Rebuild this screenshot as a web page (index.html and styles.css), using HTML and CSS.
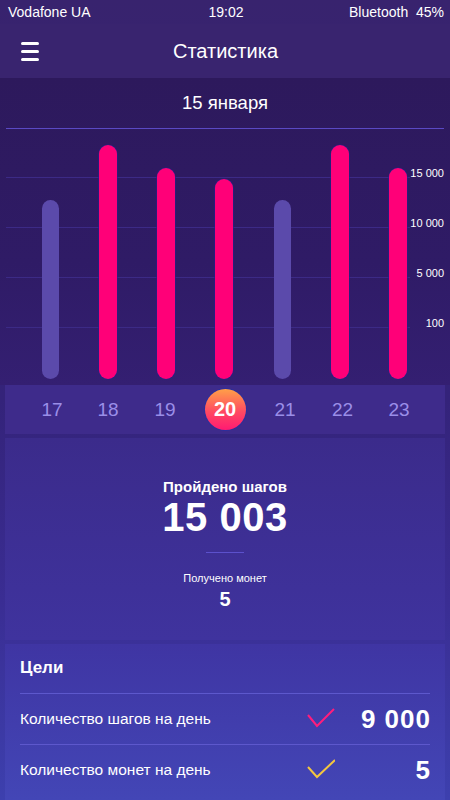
FILE: index.html
```html
<!DOCTYPE html>
<html lang="ru">
<head>
<meta charset="utf-8">
<title>Статистика</title>
<link rel="stylesheet" href="styles.css">
</head>
<body>
<div class="screen">
  <div class="status">
    <span class="carrier">Vodafone UA</span>
    <span class="time">19:02</span>
    <span class="batt">Bluetooth&nbsp;&nbsp;45%</span>
  </div>
  <header class="appbar">
    <div class="menu"><span></span><span></span><span></span></div>
    <h1 class="title">Статистика</h1>
    <div></div>
  </header>
  <section class="chart-panel">
    <div class="date">15 января</div>
    <div class="chart">
      <div class="grid">
        <div class="grow"><div class="gline"></div><div class="glabel">15 000</div></div>
        <div class="grow"><div class="gline"></div><div class="glabel">10 000</div></div>
        <div class="grow"><div class="gline"></div><div class="glabel">5 000</div></div>
        <div class="grow"><div class="gline"></div><div class="glabel">100</div></div>
      </div>
      <div class="bars">
        <div class="bar muted" style="height:179px"></div>
        <div class="bar" style="height:234px"></div>
        <div class="bar" style="height:211px"></div>
        <div class="bar" style="height:200px"></div>
        <div class="bar muted" style="height:179px"></div>
        <div class="bar" style="height:234px"></div>
        <div class="bar" style="height:211px"></div>
      </div>
    </div>
  </section>
  <div class="cards">
    <div class="card days">
      <span class="day">17</span>
      <span class="day">18</span>
      <span class="day">19</span>
      <span class="day"><span class="today">20</span></span>
      <span class="day">21</span>
      <span class="day">22</span>
      <span class="day">23</span>
    </div>
    <div class="card stats">
      <div class="stat-label">Пройдено шагов</div>
      <div class="stat-value">15 003</div>
      <div class="sep"></div>
      <div class="coin-label">Получено монет</div>
      <div class="coin-value">5</div>
    </div>
    <div class="card goals">
      <div class="goals-title">Цели</div>
      <div class="goal">
        <span class="goal-name">Количество шагов на день</span>
        <svg class="check" width="28" height="20" viewBox="0 0 28 20"><path d="M1 7 L10 18 L27 1" fill="none" stroke="#ff1d7c" stroke-width="2"/></svg>
        <span class="goal-val">9 000</span>
      </div>
      <div class="goal">
        <span class="goal-name">Количество монет на день</span>
        <svg class="check" width="28" height="20" viewBox="0 0 28 20"><path d="M1 8 L10 18 L28 1" fill="none" stroke="#f4c63f" stroke-width="2"/></svg>
        <span class="goal-val">5</span>
      </div>
    </div>
  </div>
</div>
</body>
</html>
```
FILE: styles.css
```css
* { box-sizing: border-box; }
html, body { margin: 0; padding: 0; }
body {
  width: 450px;
  height: 800px;
  overflow: hidden;
  font-family: "Liberation Sans", Arial, sans-serif;
  color: #fff;
  background: #34226f;
}
.screen {
  width: 450px;
  height: 800px;
  display: flex;
  flex-direction: column;
  background: linear-gradient(180deg, #38236e 0%, #34237a 50%, #3a2d93 75%, #3d40ae 100%);
}
.status {
  height: 24px;
  display: grid;
  grid-template-columns: 1fr auto 1fr;
  align-items: center;
  padding: 0 6px 0 8px;
  font-size: 14px;
  line-height: 24px;
}
.status .batt { text-align: right; }
.appbar {
  height: 54px;
  display: grid;
  grid-template-columns: 1fr auto 1fr;
  align-items: center;
  padding: 0 20px 0 21px;
  background: #39246f;
}
.menu {
  width: 18px;
  display: flex;
  flex-direction: column;
  gap: 5px;
}
.menu span {
  display: block;
  height: 3px;
  border-radius: 1.5px;
  background: #fff;
}
.title {
  margin: 0;
  font-size: 20px;
  font-weight: normal;
  line-height: 24px;
}
.chart-panel {
  background: linear-gradient(180deg, #2d195c 0%, #2f1b66 60%, #341f72 100%);
}
.date {
  height: 51px;
  margin: 0 6px;
  border-bottom: 1px solid #5a49c4;
  text-align: center;
  font-size: 18.5px;
  line-height: 50px;
}
.chart {
  position: relative;
  height: 256px;
}
.grid {
  position: absolute;
  left: 0;
  right: 0;
  top: -1px;
  display: flex;
  flex-direction: column;
}
.grow {
  height: 50px;
  display: flex;
  align-items: flex-end;
}
.gline {
  flex: 1;
  margin-left: 6px;
  height: 1px;
  background: #3c2a86;
}
.glabel {
  width: 40px;
  text-align: right;
  padding-right: 6px;
  font-size: 11px;
  line-height: 12px;
  margin-bottom: -1px;
  color: #fff;
}
.bars {
  position: relative;
  height: 100%;
  display: grid;
  grid-template-columns: repeat(7, 58px);
  padding: 0 0 6px 21px;
  align-items: end;
}
.bar {
  width: 18px;
  justify-self: center;
  border-radius: 9px;
  background: #ff0078;
  box-shadow: 0 0 0 0.6px #25218a;
}
.bar.muted {
  width: 17px;
  background: #5b4aab;
  box-shadow: none;
}
.cards {
  flex: 1;
  display: flex;
  flex-direction: column;
  gap: 4px;
  padding: 0 5px;
}
.days {
  height: 49px;
  display: grid;
  grid-template-columns: 56px 56px 58px 62px 58px 57px 56px;
  padding-left: 19px;
  align-items: center;
  background: #3e2b8b;
}
.day {
  text-align: center;
  font-size: 19px;
  color: #9a8ee8;
  line-height: 22px;
  display: flex;
  justify-content: center;
}
.today {
  width: 41px;
  height: 41px;
  border-radius: 50%;
  background: linear-gradient(180deg, #ffa048 0%, #ff4a62 55%, #ff1a72 100%);
  box-shadow: 0 0 0 1px #2b2f9e;
  color: #fff;
  font-weight: bold;
  font-size: 20px;
  line-height: 41px;
  text-align: center;
}
.stats {
  height: 202px;
  display: flex;
  flex-direction: column;
  align-items: center;
  padding-top: 40px;
  background: linear-gradient(180deg, #3b2b8b 0%, #3f339e 100%);
}
.stat-label {
  font-size: 15px;
  font-weight: bold;
  line-height: 18px;
}
.stat-value {
  margin-top: 1px;
  font-size: 40px;
  font-weight: bold;
  line-height: 40px;
  letter-spacing: 0.5px;
}
.sep {
  margin-top: 15px;
  width: 38px;
  height: 1px;
  background: #5c51cc;
}
.coin-label {
  margin-top: 18px;
  font-size: 11px;
  line-height: 14px;
}
.coin-value {
  margin-top: 3px;
  font-size: 20px;
  font-weight: bold;
  line-height: 22px;
}
.goals {
  flex: 1;
  padding: 14px 15px 0;
  background: linear-gradient(180deg, #3f35a3 0%, #4346b6 100%);
}
.goals-title {
  font-size: 17px;
  font-weight: bold;
  line-height: 20px;
  padding-bottom: 15px;
}
.goal {
  height: 51px;
  border-top: 1px solid #5d58cc;
  display: flex;
  align-items: center;
}
.goal-name {
  flex: 1;
  font-size: 15.5px;
}
.check {
  display: block;
  margin-top: -2px;
}
.goal-val {
  width: 96px;
  text-align: right;
  font-size: 26px;
  font-weight: bold;
  letter-spacing: 1px;
  margin-right: -1px;
}
```
